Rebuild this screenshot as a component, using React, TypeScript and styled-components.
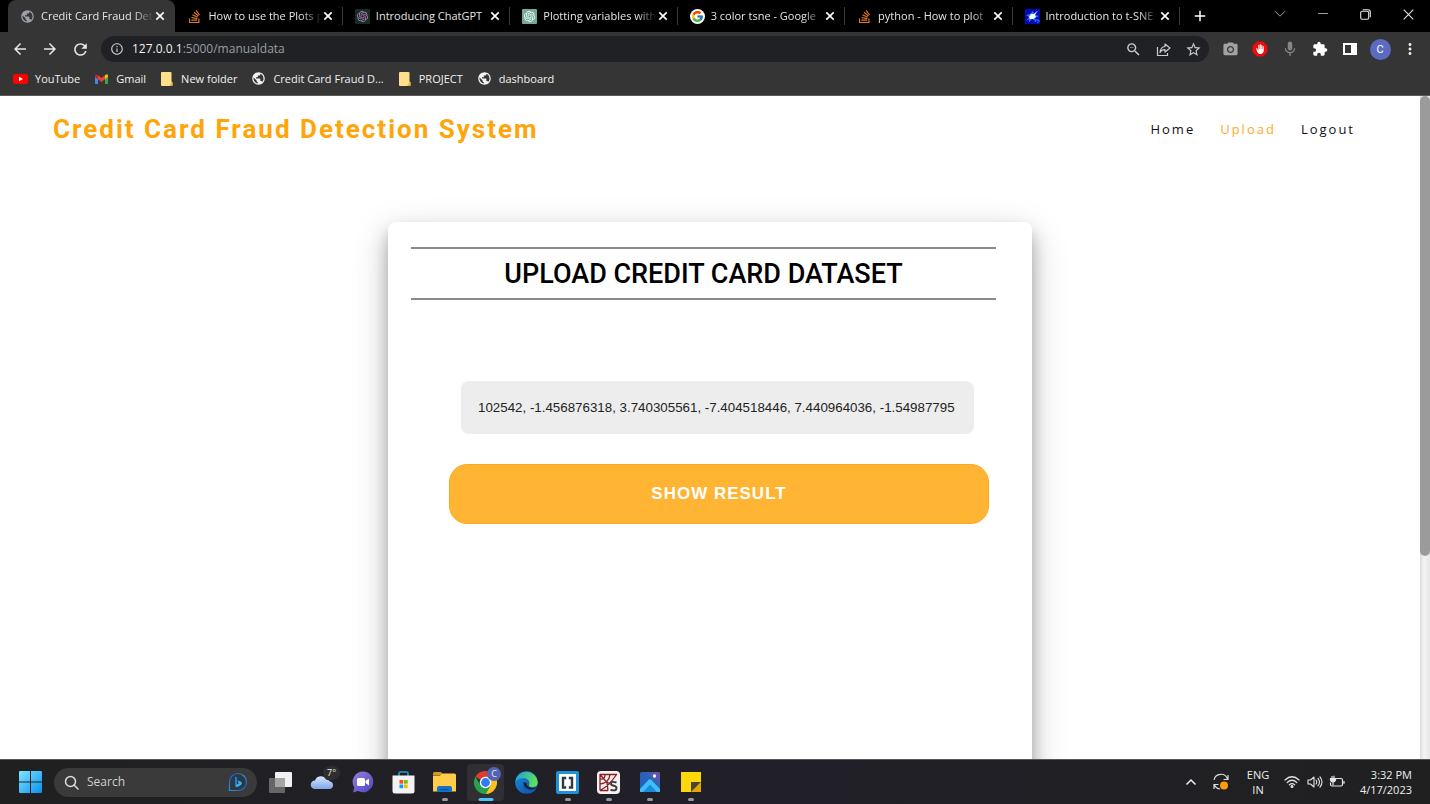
import React from "react";
import styled, { createGlobalStyle, css } from "styled-components";
import {
  MdArrowBack, MdArrowForward, MdRefresh, MdInfoOutline, MdZoomOut, MdStarBorder,
  MdPhotoCamera, MdMic, MdExtension, MdMoreVert, MdAdd, MdPublic, MdBackHand,
} from "react-icons/md";
import { FaStackOverflow } from "react-icons/fa";
import { FcGoogle } from "react-icons/fc";
import { SiOpenai } from "react-icons/si";

const GlobalStyle = createGlobalStyle`
  * { box-sizing: border-box; }
  body { margin: 0; background: #fff; font-family: "Open Sans", "Noto Sans", sans-serif; }
  button { border: 0; padding: 0; margin: 0; background: none; color: inherit; font: inherit; cursor: pointer; }
  a { color: inherit; text-decoration: none; }
  svg { display: block; flex: none; }
`;

const Screen = styled.div`
  display: flex;
  flex-direction: column;
  height: 100vh;
  overflow: hidden;
`;

/* ---------- browser tabs ---------- */

const TabStrip = styled.header`
  display: flex;
  align-items: stretch;
  height: 32px;
  padding-left: 8px;
  background: #000;
  color: #e4e4e4;
  flex: none;
`;

const TabList = styled.div`
  display: flex;
  flex: 0 1 1172px;
  min-width: 0;
`;

const TabItem = styled.div<{ $active?: boolean }>`
  display: flex;
  align-items: center;
  flex: 1 1 0;
  min-width: 0;
  padding: 0 9px 0 12px;
  ${(p) =>
    p.$active
      ? css`
          background: #353535;
          border-radius: 8px 8px 0 0;
        `
      : css`
          background: linear-gradient(#3a3a3a, #3a3a3a) no-repeat right 7px / 1px 18px;
        `}
`;

const TabButton = styled.button`
  display: flex;
  align-items: center;
  gap: 6px;
  flex: 1;
  min-width: 0;
  height: 30px;
`;

const TabTitle = styled.span<{ $fade?: boolean }>`
  flex: 1;
  min-width: 0;
  white-space: nowrap;
  text-align: left;
  font-size: 11px;
  line-height: 16px;
  ${(p) => p.$fade && css`mask-image: linear-gradient(90deg, #000 82%, transparent);`}
`;

const CloseTab = styled.button`
  display: grid;
  place-items: center;
  width: 12px;
  height: 16px;
  color: #fff;
`;

const NewTab = styled.button`
  display: grid;
  place-items: center;
  width: 40px;
  color: #fff;
`;

const WindowControls = styled.div`
  display: flex;
  margin-left: auto;
  color: #e4e4e4;
`;

const WindowButton = styled.button<{ $dim?: boolean }>`
  display: grid;
  place-items: center;
  width: 43px;
  height: 28px;
  opacity: ${(p) => (p.$dim ? 0.7 : 1)};
`;

/* ---------- toolbar ---------- */

const Toolbar = styled.div`
  display: flex;
  align-items: center;
  height: 34px;
  padding: 0 5px;
  background: #353535;
  color: #e8e8e8;
  flex: none;
`;

const ToolButton = styled.button`
  display: grid;
  place-items: center;
  width: 30px;
  height: 30px;
  flex: none;
`;

const AddressBar = styled.form`
  display: flex;
  align-items: center;
  flex: 1;
  height: 26px;
  margin: 0 6px;
  padding: 0 1px 0 9px;
  border-radius: 13px;
  background: #202124;
  color: #c8ccd0;
`;

const Address = styled.p`
  flex: 1;
  margin: 0 0 0 8px;
  color: #9a9da1;
  font-size: 12px;
  line-height: 18px;
`;

const Host = styled.span`
  color: #f1f1f1;
`;

const Avatar = styled.span`
  display: grid;
  place-items: center;
  width: 21px;
  height: 21px;
  border-radius: 50%;
  background: #5c6bc0;
  color: #fff;
  font: 11px/21px Roboto, sans-serif;
`;

/* ---------- bookmarks ---------- */

const Bookmarks = styled.nav`
  display: flex;
  align-items: center;
  gap: 14px;
  height: 30px;
  padding: 0 13px 4px;
  background: #353535;
  border-bottom: 1px solid #5a5a5a;
  color: #f1f1f1;
  flex: none;
`;

const Bookmark = styled.a`
  display: flex;
  align-items: center;
  gap: 7px;
  font-size: 11px;
  line-height: 16px;
  white-space: nowrap;
`;

/* ---------- web page ---------- */

const Viewport = styled.div`
  display: flex;
  flex: 1;
  min-height: 0;
`;

const Page = styled.div`
  flex: 1;
  min-width: 0;
  overflow: hidden;
  background: #fff;
`;

const ScrollTrack = styled.div`
  width: 10px;
  background: linear-gradient(90deg, #dcdcdc, #f4f4f4 40%, #e6e6e6);
  flex: none;
`;

const ScrollThumb = styled.div`
  height: 460px;
  border-radius: 5px;
  background: #9b9b9b;
`;

const SiteHeader = styled.header`
  display: flex;
  align-items: center;
  justify-content: space-between;
  height: 66px;
  padding: 0 65px 0 53px;
`;

const Brand = styled.h1`
  margin: 0;
  color: #ffa50a;
  font: 700 26px/32px Roboto, sans-serif;
  letter-spacing: 2px;
`;

const SiteNav = styled.nav`
  display: flex;
  gap: 25px;
`;

const NavLink = styled.a<{ $active?: boolean }>`
  color: ${(p) => (p.$active ? "#ffa92e" : "#111")};
  font-size: 13px;
  line-height: 20px;
  letter-spacing: 2px;
`;

const Card = styled.main`
  width: 644px;
  max-width: 100%;
  height: 700px;
  margin: 60px auto 0;
  padding: 25px 36px 0 23px;
  border-radius: 8px;
  background: #fff;
  box-shadow: 0 10px 16px rgba(0, 0, 0, 0.26), 0 12px 36px rgba(0, 0, 0, 0.22);
`;

const CardTitle = styled.h2`
  margin: 0;
  padding: 9px 0 7px;
  border: solid #8a8a8a;
  border-width: 2px 0;
  color: #000;
  font: 500 27px/33px Roboto, sans-serif;
  text-align: center;
`;

const DataForm = styled.form`
  display: flex;
  flex-direction: column;
  gap: 30px;
  margin-top: 81px;
  padding: 0 7px 0 38px;
`;

const DataInput = styled.input`
  height: 53px;
  margin: 0 15px 0 12px;
  padding: 0 16px 0 17px;
  border: 0;
  border-radius: 8px;
  background: #ededed;
  color: #222;
  font-family: "Liberation Sans", Arial, sans-serif;
`;

const SubmitButton = styled.button`
  height: 60px;
  border: 1px solid #ffa91c;
  border-radius: 18px;
  background: #ffb533;
  color: #fff;
  font: 700 17px/24px "Liberation Sans", Arial, sans-serif;
  letter-spacing: 1px;
`;

/* ---------- taskbar ---------- */

const Taskbar = styled.footer`
  display: flex;
  align-items: center;
  height: 45px;
  padding: 0 18px 0 19px;
  background: linear-gradient(90deg, #202021, #211f28 50%, #202021);
  border-top: 1px solid #555;
  color: #eee;
  flex: none;
`;

const SearchBox = styled.label`
  display: flex;
  align-items: center;
  width: 203px;
  height: 29px;
  margin: 0 3px 0 12px;
  padding: 0 9px 0 10px;
  border-radius: 15px;
  background: #3a3a3a;
`;

const SearchInput = styled.input`
  flex: 1;
  min-width: 0;
  margin-left: 8px;
  padding: 0;
  border: 0;
  outline: 0;
  background: none;
  color: #fff;
  font: 12px/18px "Open Sans", sans-serif;
  &::placeholder { color: #cfcfcf; opacity: 1; }
`;

const AppButton = styled.button<{ $state?: "open" | "active" }>`
  position: relative;
  display: grid;
  place-items: center;
  width: 37px;
  height: 37px;
  margin: 0 2px;
  border-radius: 4px;
  background: ${(p) => (p.$state === "active" ? "#303034" : "none")};
  flex: none;
  ${(p) =>
    p.$state &&
    css`
      &::after {
        content: "";
        position: absolute;
        bottom: 0;
        left: 50%;
        width: ${p.$state === "active" ? 15 : 6}px;
        height: 3px;
        border-radius: 2px;
        background: ${p.$state === "active" ? "#4cc2ff" : "#9a9a9a"};
        transform: translateX(-50%);
      }
    `}
`;

const AppBadge = styled.span<{ $dark?: boolean }>`
  position: absolute;
  top: ${(p) => (p.$dark ? 2 : 3)}px;
  right: ${(p) => (p.$dark ? 0 : 3)}px;
  min-width: 14px;
  height: 14px;
  padding: 0 4px;
  border-radius: 7px;
  background: ${(p) => (p.$dark ? "#2f2f2f" : "#5464b4")};
  color: #eee;
  font: 9px/14px "Open Sans", sans-serif;
`;

const Tray = styled.div`
  display: flex;
  align-items: center;
  margin-left: auto;
`;

const TrayButton = styled.button<{ $w: number }>`
  display: grid;
  place-items: center;
  width: ${(p) => p.$w}px;
  height: 37px;
`;

const TrayText = styled.button<{ $w: number; $end?: boolean }>`
  width: ${(p) => p.$w}px;
  padding-bottom: 1px;
  text-align: ${(p) => (p.$end ? "right" : "center")};
  font-size: 11px;
  line-height: 15px;
  white-space: nowrap;
`;

/* ---------- drawings ---------- */

const CloseIcon = () => (
  <svg width="10" height="10" viewBox="0 0 10 10" stroke="currentColor" strokeWidth="1.700">
    <path d="M1.300 1.300l7.400 7.400M8.700 1.300L1.300 8.700" />
  </svg>
);

const Chevron = () => (
  <svg width="12" height="8" viewBox="0 0 12 8" fill="none" stroke="currentColor">
    <path d="M1 1.200l5 5 5-5" />
  </svg>
);

const Minimize = () => (
  <svg width="10" height="10" viewBox="0 0 10 10" stroke="currentColor">
    <path d="M0 4.500h10" />
  </svg>
);

const Restore = () => (
  <svg width="11" height="11" viewBox="0 0 11 11" fill="none" stroke="currentColor" strokeWidth="1.100">
    <rect x=".7" y="2.300" width="8" height="8" rx="1.500" />
    <path d="M2.800.7H8q2.300 0 2.300 2.300v5.300" />
  </svg>
);

const CloseWindow = () => (
  <svg width="11" height="11" viewBox="0 0 11 11" stroke="currentColor" strokeWidth="1.100">
    <path d="M.7.7l9.600 9.600M10.300.7L.7 10.300" />
  </svg>
);

const OpenAiTile = ({ bg, fg }: { bg: string; fg: string }) => (
  <svg width="15" height="15" viewBox="0 0 15 15">
    <rect width="15" height="15" rx="1" fill={bg} />
    <SiOpenai x="2" y="2" size={11} color={fg} />
  </svg>
);

const GoogleTile = () => (
  <svg width="15" height="15" viewBox="0 0 15 15">
    <circle cx="7.500" cy="7.500" r="7.500" fill="#fff" />
    <FcGoogle x="1" y="1" size={13} />
  </svg>
);

const SparkTile = () => (
  <svg width="15" height="15" viewBox="0 0 15 15">
    <rect width="15" height="15" fill="#0509b8" />
    <path d="M1 12l3-4-3-2 4-1 3-3 1 3 5-4-4 5 4 1-4 2 1 3-4-2-3 3v-3z" fill="#2f7bff" />
    <path d="M4 8l2-3 3 0 3-3-2 4 1 2-3 2-3 0z" fill="#fff" />
    <path d="M10 13q0-3 3-2t-1 3" stroke="#3b8bff" fill="none" />
  </svg>
);

const YouTube = () => (
  <svg width="15" height="14" viewBox="0 0 15 14">
    <rect y="2" width="15" height="10" rx="2.500" fill="#f00" />
    <path d="M6 4.800v4.400L10 7z" fill="#fff" />
  </svg>
);

const Gmail = () => (
  <svg width="15" height="14" viewBox="0 0 15 14">
    <path d="M1 3.500v7.700q0 .8.800.8H4V5.500z" fill="#4285f4" />
    <path d="M14 3.500v7.700q0 .8-.8.800H11V5.500z" fill="#34a853" />
    <path d="M11 3.200L12 2.400q2-.9 2 1.300V5l-3 2.300z" fill="#fbbc04" />
    <path d="M4 3.200L3 2.400Q1 1.500 1 3.700V5l3 2.300z" fill="#c5221f" />
    <path d="M4 3.200l3.500 2.700L11 3.200v4.100L7.500 10 4 7.300z" fill="#ea4335" />
  </svg>
);

const Folder = () => (
  <svg width="14" height="14" viewBox="0 0 14 14">
    <path d="M1 1q0-1 1-1h8.500q1 0 1 1v8.500l1 1V13q0 1-1 1H2q-1 0-1-1z" fill="#ffe08a" />
    <path d="M11.500 9.500l1 1V13q0 1-1 1H9q2-1 2.500-4.500z" fill="#e2b53e" />
  </svg>
);

const ShareIcon = () => (
  <svg width="15" height="15" viewBox="0 0 15 15" fill="none" stroke="currentColor" strokeWidth="1.200">
    <path d="M1.500 5v8.500h10V11" />
    <path d="M9 2l5 4-5 4V7.700Q5.500 7.600 4 10.500 4.500 5 9 4.500z" strokeLinejoin="round" />
  </svg>
);

const StopHand = () => (
  <svg width="16" height="16" viewBox="0 0 16 16">
    <path d="M5 .5h6L15.500 5v6L11 15.500H5L.5 11V5z" fill="#ee0b0b" />
    <MdBackHand x="3" y="3" size={10} color="#fff" />
  </svg>
);

const SidePanel = () => (
  <svg width="14" height="14" viewBox="0 0 14 14">
    <path d="M0 1h14v12H0zM2 3v8h6V3z" fill="#fff" fillRule="evenodd" />
  </svg>
);

const WindowsLogo = () => (
  <svg width="23" height="22" viewBox="0 0 23 22">
    <defs>
      <linearGradient id="win" gradientUnits="userSpaceOnUse" x1="0" y1="0" x2="23" y2="22">
        <stop stopColor="#7be8ff" />
        <stop offset="1" stopColor="#0a8ff0" />
      </linearGradient>
    </defs>
    <path d="M1 0h10v10.500H0V1q0-1 1-1zM12 0h10q1 0 1 1v9.500H12zM0 11.500h11V22H1q-1 0-1-1zM12 11.500h11V21q0 1-1 1H12z" fill="url(#win)" />
  </svg>
);

const SearchIcon = () => (
  <svg width="15" height="15" viewBox="0 0 15 15" fill="none" stroke="#ddd" strokeWidth="1.500">
    <circle cx="6.500" cy="6.500" r="5" />
    <path d="M10 10l4 4" strokeLinecap="round" />
  </svg>
);

const BingIcon = () => (
  <svg width="20" height="20" viewBox="0 0 20 20">
    <defs>
      <linearGradient id="bing" x1="0" y1="0" x2="1" y2="1">
        <stop stopColor="#2456c8" />
        <stop offset=".5" stopColor="#2a8fd8" />
        <stop offset="1" stopColor="#2b50c8" />
      </linearGradient>
    </defs>
    <path d="M1.500 18.500V10A8.500 8.500 0 1 1 10 18.500z" fill="#2d3840" stroke="url(#bing)" strokeWidth="1.200" />
    <path d="M7 4.500l2 1v6.800l-2 1.800z" fill="#1f7fe8" />
    <path d="M7 14.100l2-1.800 1.800-.8-1.300-3.200 4 1.700q1 2-.8 3.300L9 15.200z" fill="#35b4f0" />
  </svg>
);

const TaskView = () => (
  <svg width="23" height="21" viewBox="0 0 23 21">
    <rect x="6" width="17" height="15" rx="1" fill="#f1f1f1" />
    <rect y="6" width="16" height="15" rx="1" fill="#666" />
    <rect x="6" y="6" width="10" height="9" fill="#a5a5a5" />
  </svg>
);

const Cloud = () => (
  <svg width="24" height="24" viewBox="0 0 24 24">
    <defs>
      <linearGradient id="cloud" x1="0" y1="0" x2="0" y2="1">
        <stop stopColor="#d9e7ff" />
        <stop offset="1" stopColor="#7ea6e8" />
      </linearGradient>
    </defs>
    <path d="M5 19a4.300 4.300 0 0 1 0-8.600A6 6 0 0 1 16 9.500a5 5 0 0 1 4 2 3.800 3.800 0 0 1-.5 7.500z" fill="url(#cloud)" />
  </svg>
);

const Chat = () => (
  <svg width="22" height="22" viewBox="0 0 22 22">
    <defs>
      <linearGradient id="chat" x1="0" y1="0" x2="1" y2="1">
        <stop stopColor="#9a7fd6" />
        <stop offset="1" stopColor="#4a45c4" />
      </linearGradient>
    </defs>
    <path d="M11 .5a10.400 10.400 0 1 1-5 19.600L1 21.500l1.300-5A10.400 10.400 0 0 1 11 .5z" fill="url(#chat)" />
    <rect x="5" y="7" width="8" height="8" rx="1.500" fill="#fff" />
    <path d="M13.500 10l3.500-2.500v7L13.500 12z" fill="#fff" />
  </svg>
);

const Store = () => (
  <svg width="23" height="23" viewBox="0 0 23 23">
    <path d="M7 5V2.500Q7 1 8.500 1h6Q16 1 16 2.500V5" fill="none" stroke="#1a9fd8" strokeWidth="1.600" />
    <path d="M.5 4.500h22V20q0 2.500-2.500 2.500H3Q.5 22.500.5 20z" fill="#f3f3f3" />
    <path d="M7.500 9h3.700v3.700H7.500z" fill="#f25022" />
    <path d="M12 9h3.700v3.700H12z" fill="#7fba00" />
    <path d="M7.500 13.500h3.700v3.700H7.500z" fill="#00a4ef" />
    <path d="M12 13.500h3.700v3.700H12z" fill="#ffb900" />
  </svg>
);

const Explorer = () => (
  <svg width="23" height="21" viewBox="0 0 23 21">
    <path d="M0 1.500Q0 0 1.500 0H8l2.500 3H0z" fill="#d99a17" />
    <path d="M0 3.500h7L9.500 1.500h12Q23 1.500 23 3v16.500H0z" fill="#ffcd4a" />
    <path d="M4 20v-4q0-2 2-2h11q2 0 2 2v4z" fill="#1573c9" />
    <path d="M7.500 17h8v1.200h-8z" fill="#0b4f96" />
  </svg>
);

const Chrome = () => (
  <svg width="23" height="23" viewBox="0 0 24 24">
    <path d="M12 12L1.600 6A12 12 0 0 1 22.400 6z" fill="#e33b2e" />
    <path d="M12 6h10.400A12 12 0 0 1 12 24l5.200-9z" fill="#fcc31e" />
    <path d="M1.600 6A12 12 0 0 0 12 24l5.200-9L12 12 6.800 15z" fill="#26a24b" />
    <circle cx="12" cy="12" r="6" fill="#fff" />
    <circle cx="12" cy="12" r="4.600" fill="#2f7df0" />
  </svg>
);

const Edge = () => (
  <svg width="23" height="23" viewBox="0 0 23 23">
    <defs>
      <linearGradient id="edgeTop" x1="0" y1="0" x2="1" y2=".4">
        <stop stopColor="#1c9de0" />
        <stop offset="1" stopColor="#5fe05a" />
      </linearGradient>
      <linearGradient id="edgeLow" x1="0" y1="0" x2="1" y2="1">
        <stop stopColor="#1b8fe0" />
        <stop offset="1" stopColor="#0b4aa0" />
      </linearGradient>
    </defs>
    <circle cx="11.500" cy="11.500" r="11.300" fill="url(#edgeLow)" />
    <path d="M.3 11A11.300 11.300 0 0 1 22.800 11q.2 5-5.300 5-4 0-3.500-2.300Q15 12 14 10 12 7 8.500 7 3 7 .3 11z" fill="url(#edgeTop)" />
    <path d="M8.500 11q-1 5 3.500 7.500 4 2 9-1.200l.8-1.300q-3 1.500-6 .8Q11.500 15.500 11.500 12z" fill="#202028" />
    <path d="M8.600 11Q6.500 17 11 21q2 1.500 4 1.300 4-1 6.300-5-5 2.700-9 .5Q8.500 15.500 8.600 11z" fill="#0f5fb8" />
  </svg>
);

const Brackets = () => (
  <svg width="23" height="23" viewBox="0 0 23 23">
    <rect width="23" height="23" rx="2" fill="#1f93d8" />
    <rect x="3" y="3" width="17" height="17" fill="#fff" />
    <path d="M10.200 7H7v9.500h3.200M12.800 7H16v9.500h-3.200" fill="none" stroke="#2d3a44" strokeWidth="2.400" />
  </svg>
);

const Spyder = () => (
  <svg width="23" height="23" viewBox="0 0 23 23">
    <rect width="23" height="23" rx="4" fill="#f6f2f2" />
    <path d="M3 3.500h17M3 3v16.500M3 8q5 1 5-4.500M3 13q9-1 10-9.500M3 19.500Q12 15 19.500 3.500M3 3.500l7 8 1 8M3 19.500h8M10 11l3 2" fill="none" stroke="#8c1c22" strokeWidth="1.300" />
    <path d="M19.500 11.500q-5.500-1.800-5.500 1.300 0 1.500 2.800 2 2.700.5 2.700 2.400 0 3.300-6 1.700" fill="none" stroke="#3a3a3a" strokeWidth="1.900" />
  </svg>
);

const Photos = () => (
  <svg width="20" height="20" viewBox="0 0 20 20">
    <defs>
      <linearGradient id="sky" x1="0" y1="1" x2="1" y2="0">
        <stop stopColor="#1663c7" />
        <stop offset=".6" stopColor="#2f62b8" />
        <stop offset="1" stopColor="#7a4fa8" />
      </linearGradient>
    </defs>
    <rect width="20" height="20" rx="1.500" fill="url(#sky)" />
    <path d="M0 17L8.500 8q1.500-1.500 3 0L20 17v3H0z" fill="#3fc0f5" />
    <path d="M3 20l7-7.500L17 20z" fill="#1b8be0" />
    <circle cx="14.500" cy="4" r="1.700" fill="#fff" />
  </svg>
);

const StickyNotes = () => (
  <svg width="20" height="20" viewBox="0 0 20 20">
    <path d="M0 0h20v10L10 20H0z" fill="#ffd60a" />
    <path d="M10 10h10L10 20z" fill="#4a4433" />
    <path d="M20 10v10H10z" fill="#e0a800" />
  </svg>
);

const UpdateIcon = () => (
  <svg width="18" height="18" viewBox="0 0 18 18" fill="none" stroke="#ddd" strokeWidth="1.200">
    <path d="M2 7a7 7 0 0 1 13.500-1M16 2v4.500h-4.500" />
    <path d="M2 16v-4.500h4.500M2.500 12Q4 15.500 8 16" />
    <circle cx="12" cy="12.500" r="4" fill="#ff9a0a" stroke="none" />
  </svg>
);

const Wifi = () => (
  <svg width="16" height="14" viewBox="0 0 16 14" fill="none" stroke="#e4e4e4" strokeWidth="1.200" strokeLinecap="round">
    <path d="M1 5q7-6.500 14 0M3.200 7.500q4.800-4.500 9.600 0M5.400 9.800q2.600-2.400 5.200 0" />
    <circle cx="8" cy="11.500" r=".9" fill="#e4e4e4" />
  </svg>
);

const Speaker = () => (
  <svg width="16" height="14" viewBox="0 0 16 14" fill="none" stroke="#e4e4e4" strokeWidth="1.100" strokeLinejoin="round" strokeLinecap="round">
    <path d="M1 5h2.500L7 2v10L3.500 9H1z" />
    <path d="M9 5q1.500 2 0 4M11 3.300q3 3.700 0 7.400M13 1.800q4 5.200 0 10.400" />
  </svg>
);

const Battery = () => (
  <svg width="16" height="14" viewBox="0 0 16 14" fill="none" stroke="#e4e4e4" strokeWidth="1.200">
    <path d="M6.500 3.500H12q1.500 0 1.500 1.500v4.500Q13.500 11 12 11H3q-1.500 0-1.500-1.500V7.500M15 6v2.800" />
    <path d="M3 1v2.500M5 .8v2.500M1.500 3.500h5V5Q6 7 4 7T1.500 5zM4 7v3.500" fill="#e4e4e4" />
  </svg>
);

const CaretUp = () => (
  <svg width="12" height="8" viewBox="0 0 12 8" fill="none" stroke="#eee" strokeWidth="1.500">
    <path d="M1.500 6.500L6 2l4.500 4.500" />
  </svg>
);

const tabs = [
  { title: "Credit Card Fraud Det", icon: <MdPublic size={15} color="#9aa0a6" />, active: true, fade: true },
  { title: "How to use the Plots p", icon: <FaStackOverflow size={15} color="#e0782a" />, fade: true },
  { title: "Introducing ChatGPT", icon: <OpenAiTile bg="#12301d" fg="#c77ad6" /> },
  { title: "Plotting variables with", icon: <OpenAiTile bg="#74aa9c" fg="#fff" />, fade: true },
  { title: "3 color tsne - Google", icon: <GoogleTile />, fade: true },
  { title: "python - How to plot", icon: <FaStackOverflow size={15} color="#e0782a" />, fade: true },
  { title: "Introduction to t-SNE", icon: <SparkTile />, fade: true },
];

const bookmarks = [
  { label: "YouTube", icon: <YouTube /> },
  { label: "Gmail", icon: <Gmail /> },
  { label: "New folder", icon: <Folder /> },
  { label: "Credit Card Fraud D...", icon: <MdPublic size={15} /> },
  { label: "PROJECT", icon: <Folder /> },
  { label: "dashboard", icon: <MdPublic size={15} /> },
];

export default function App() {
  return (
    <Screen>
      <GlobalStyle />
      <TabStrip>
        <TabList>
          {tabs.map((t) => (
            <TabItem key={t.title} $active={t.active}>
              <TabButton>
                {t.icon}
                <TabTitle $fade={t.fade}>{t.title}</TabTitle>
              </TabButton>
              <CloseTab aria-label="Close tab"><CloseIcon /></CloseTab>
            </TabItem>
          ))}
        </TabList>
        <NewTab aria-label="New tab"><MdAdd size={18} /></NewTab>
        <WindowControls>
          <WindowButton $dim aria-label="Search tabs"><Chevron /></WindowButton>
          <WindowButton $dim aria-label="Minimize"><Minimize /></WindowButton>
          <WindowButton aria-label="Restore"><Restore /></WindowButton>
          <WindowButton aria-label="Close"><CloseWindow /></WindowButton>
        </WindowControls>
      </TabStrip>

      <Toolbar>
        <ToolButton aria-label="Back"><MdArrowBack size={18} /></ToolButton>
        <ToolButton aria-label="Forward"><MdArrowForward size={18} /></ToolButton>
        <ToolButton aria-label="Reload"><MdRefresh size={19} /></ToolButton>
        <AddressBar>
          <MdInfoOutline size={14} />
          <Address><Host>127.0.0.1</Host>:5000/manualdata</Address>
          <ToolButton type="button" aria-label="Zoom"><MdZoomOut size={17} /></ToolButton>
          <ToolButton type="button" aria-label="Share"><ShareIcon /></ToolButton>
          <ToolButton type="button" aria-label="Bookmark"><MdStarBorder size={17} /></ToolButton>
        </AddressBar>
        <ToolButton aria-label="Screenshot"><MdPhotoCamera size={17} color="#a2a2a2" /></ToolButton>
        <ToolButton aria-label="Ad blocker"><StopHand /></ToolButton>
        <ToolButton aria-label="Voice"><MdMic size={18} color="#858585" /></ToolButton>
        <ToolButton aria-label="Extensions"><MdExtension size={16} color="#fff" /></ToolButton>
        <ToolButton aria-label="Side panel"><SidePanel /></ToolButton>
        <ToolButton aria-label="Profile"><Avatar>C</Avatar></ToolButton>
        <ToolButton aria-label="Menu"><MdMoreVert size={18} /></ToolButton>
      </Toolbar>

      <Bookmarks>
        {bookmarks.map((b) => (
          <Bookmark key={b.label} href="#">{b.icon}{b.label}</Bookmark>
        ))}
      </Bookmarks>

      <Viewport>
        <Page>
          <SiteHeader>
            <Brand>Credit Card Fraud Detection System</Brand>
            <SiteNav>
              <NavLink href="#">Home</NavLink>
              <NavLink href="#" $active>Upload</NavLink>
              <NavLink href="#">Logout</NavLink>
            </SiteNav>
          </SiteHeader>
          <Card>
            <CardTitle>UPLOAD CREDIT CARD DATASET</CardTitle>
            <DataForm onSubmit={(e) => e.preventDefault()}>
              <DataInput
                aria-label="Transaction values"
                defaultValue="102542, -1.456876318, 3.740305561, -7.404518446, 7.440964036, -1.54987795"
              />
              <SubmitButton type="submit">SHOW RESULT</SubmitButton>
            </DataForm>
          </Card>
        </Page>
        <ScrollTrack><ScrollThumb /></ScrollTrack>
      </Viewport>

      <Taskbar>
        <button aria-label="Start"><WindowsLogo /></button>
        <SearchBox>
          <SearchIcon />
          <SearchInput aria-label="Search" placeholder="Search" />
          <BingIcon />
        </SearchBox>
        <AppButton aria-label="Task view"><TaskView /></AppButton>
        <AppButton aria-label="Weather"><Cloud /><AppBadge $dark>7°</AppBadge></AppButton>
        <AppButton aria-label="Chat"><Chat /></AppButton>
        <AppButton aria-label="Store"><Store /></AppButton>
        <AppButton aria-label="File Explorer" $state="open"><Explorer /></AppButton>
        <AppButton aria-label="Chrome" $state="active"><Chrome /><AppBadge>C</AppBadge></AppButton>
        <AppButton aria-label="Edge"><Edge /></AppButton>
        <AppButton aria-label="Brackets" $state="open"><Brackets /></AppButton>
        <AppButton aria-label="Spyder" $state="open"><Spyder /></AppButton>
        <AppButton aria-label="Photos" $state="open"><Photos /></AppButton>
        <AppButton aria-label="Sticky Notes" $state="open"><StickyNotes /></AppButton>
        <Tray>
          <TrayButton $w={30} aria-label="Hidden icons"><CaretUp /></TrayButton>
          <TrayButton $w={30} aria-label="Updates"><UpdateIcon /></TrayButton>
          <TrayText $w={44}>ENG<br />IN</TrayText>
          <TrayButton $w={24} aria-label="Network"><Wifi /></TrayButton>
          <TrayButton $w={22} aria-label="Volume"><Speaker /></TrayButton>
          <TrayButton $w={22} aria-label="Battery"><Battery /></TrayButton>
          <TrayText $w={64} $end>3:32 PM<br />4/17/2023</TrayText>
        </Tray>
      </Taskbar>
    </Screen>
  );
}
